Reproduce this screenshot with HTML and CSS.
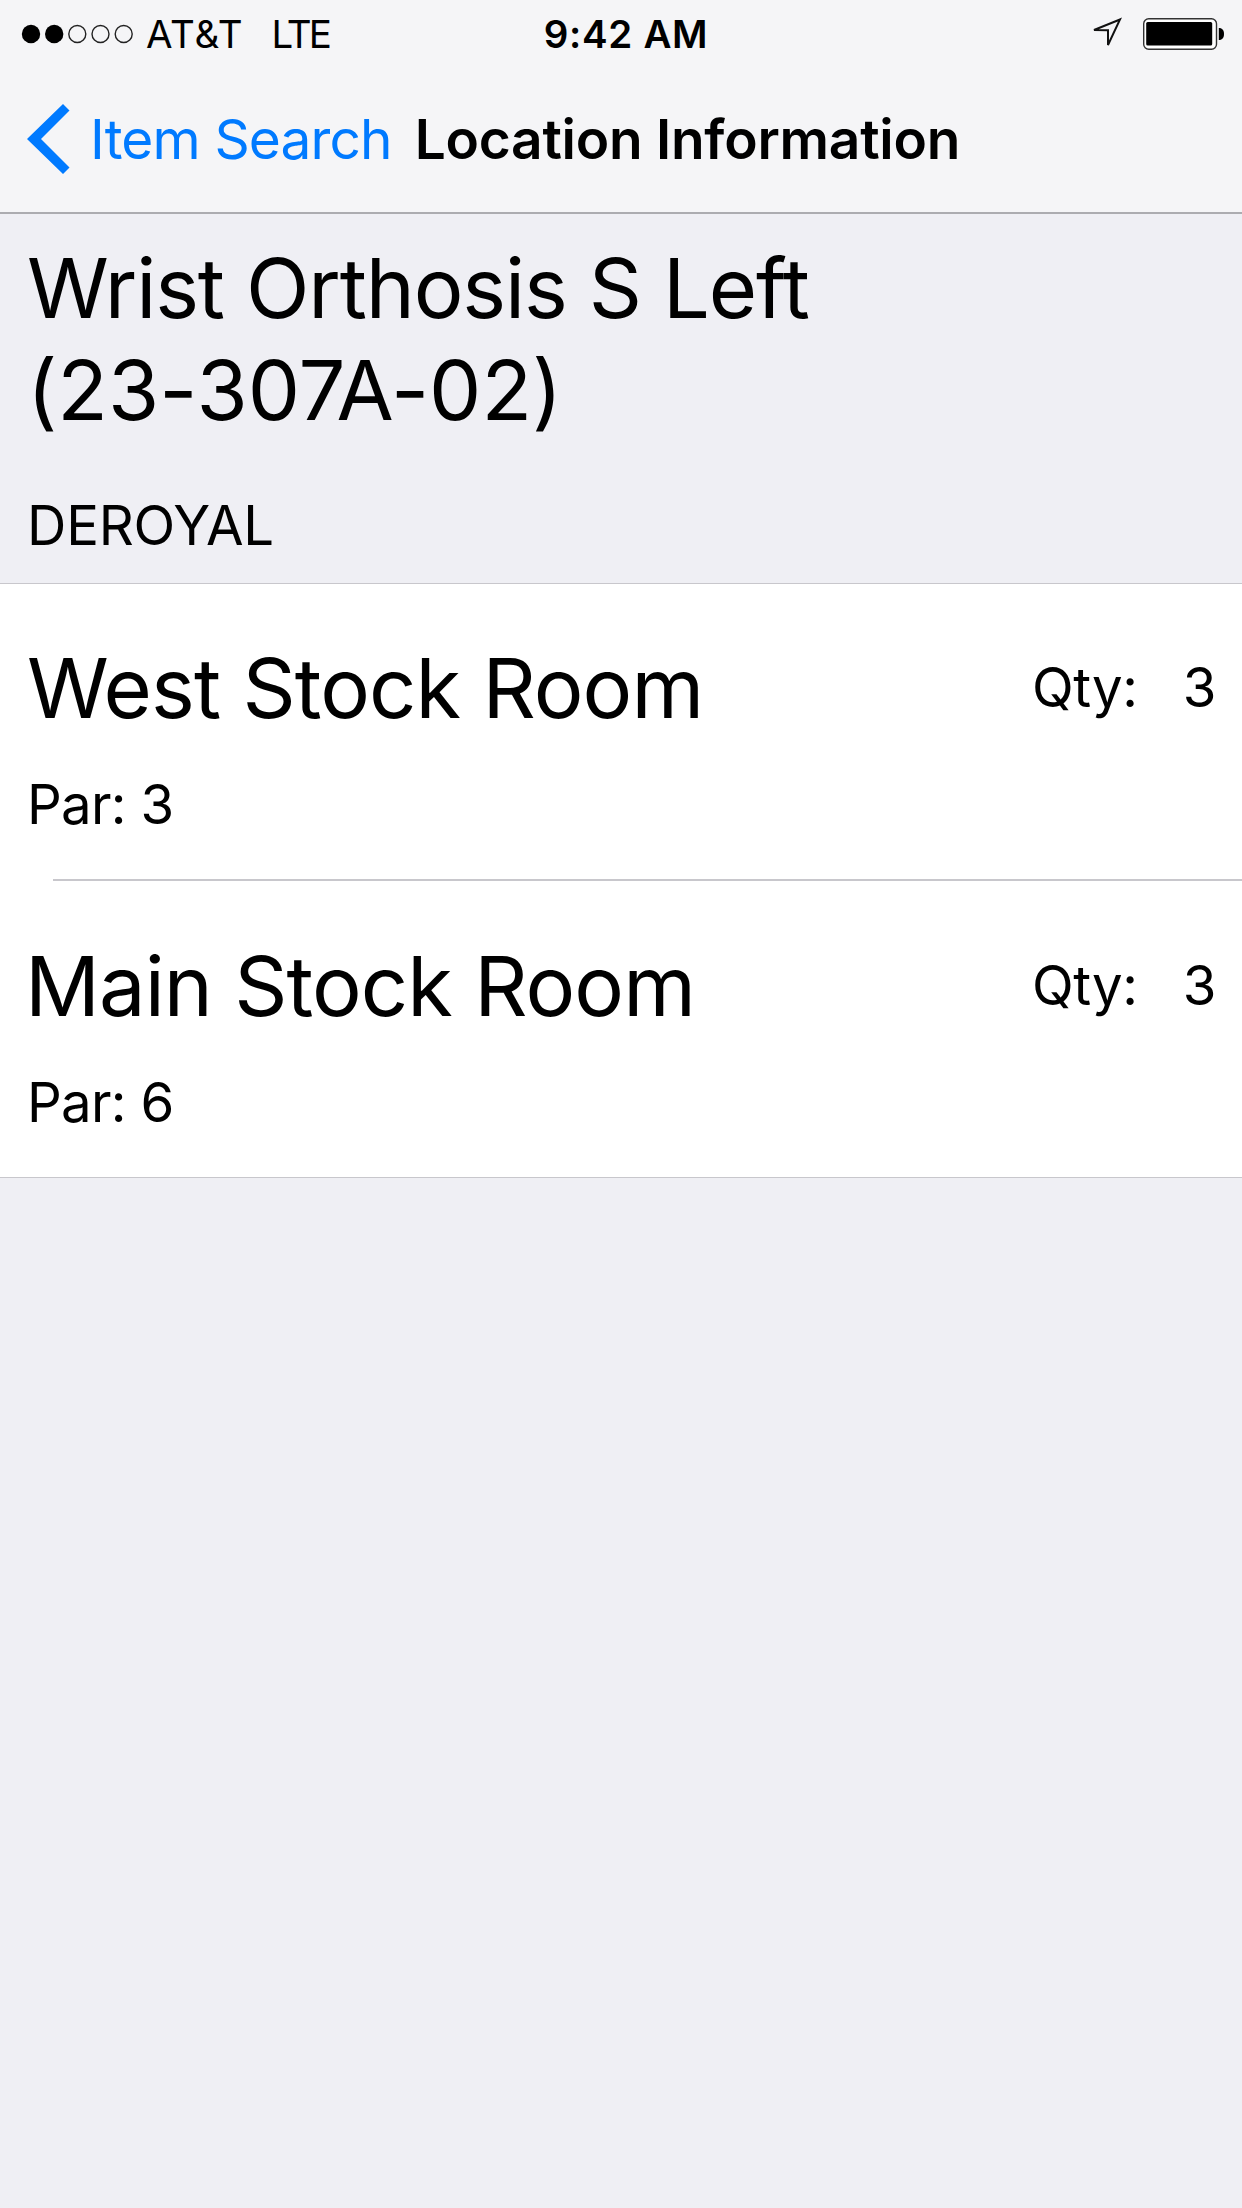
FILE: index.html
```html
<!DOCTYPE html>
<html lang="en">
<head>
    <meta charset="UTF-8">
    <meta name="viewport" content="width=device-width, initial-scale=1.0">
    <title>Location Information</title>
    <link rel="stylesheet" href="styles.css">
</head>
<body>
    <div class="header">
        <div class="status-bar">
            <div class="carrier">
                <svg class="signal" width="114" height="20" viewBox="0 0 114 20">
                    <circle cx="10" cy="10" r="9.2"/>
                    <circle cx="33.2" cy="10" r="9.2"/>
                    <circle class="empty" cx="56.3" cy="10" r="8.5"/>
                    <circle class="empty" cx="79.5" cy="10" r="8.5"/>
                    <circle class="empty" cx="102.7" cy="10" r="8.5"/>
                </svg>
                <span class="operator">AT&amp;T</span>
                <span class="network">LTE</span>
            </div>
            <div class="time">9:42 AM</div>
            <div class="indicators">
                <svg class="location" width="34" height="34" viewBox="0 0 34 34">
                    <path d="M31 2.5 L5 13 L19 13.2 L19 28 Z"/>
                </svg>
                <svg class="battery" width="82" height="32" viewBox="0 0 82 32">
                    <rect class="battery-shell" x="0.7" y="0.7" width="72.8" height="30.6" rx="5"/>
                    <rect x="3.2" y="4" width="66" height="23.6" rx="1.5"/>
                    <path d="M75.8 10 C79.5 10 81 12.5 81 16 C81 19.5 79.5 22 75.8 22 Z"/>
                </svg>
            </div>
        </div>
        <div class="nav-bar">
            <a class="back">
                <svg width="43" height="70" viewBox="0 0 43 70">
                    <path d="M0 35 L36 0 L42.5 6.5 L14 35 L42.5 63.5 L36 70 Z"/>
                </svg>
                <span>Item Search</span>
            </a>
            <div class="title">Location Information</div>
        </div>
    </div>
    <div class="item">
        <div class="item-name">Wrist Orthosis S Left</div>
        <div class="item-name item-number">(23-307A-02)</div>
        <div class="vendor">DEROYAL</div>
    </div>
    <div class="locations">
        <div class="row">
            <div class="info">
                <div class="name">West Stock Room</div>
                <div class="par">Par: 3</div>
            </div>
            <div class="qty"><span>Qty:</span><span>3</span></div>
        </div>
        <div class="separator"></div>
        <div class="row last">
            <div class="info">
                <div class="name">Main Stock Room</div>
                <div class="par">Par: 6</div>
            </div>
            <div class="qty"><span>Qty:</span><span>3</span></div>
        </div>
    </div>
</body>
</html>
```
FILE: styles.css
```css
* {
    box-sizing: border-box;
}
body {
    margin: 0;
    min-height: 100vh;
    background-color: #efeff4;
    color: #000000;
    font-family: Inter, "Liberation Sans", sans-serif;
    font-size: 54.5px;
    line-height: 66px;
    white-space: nowrap;
}
svg {
    display: block;
    flex: none;
}
.header {
    height: 214px;
    background-color: #f5f5f7;
    border-bottom: 2px solid #acacb0;
}
.status-bar {
    display: grid;
    grid-template-columns: 1fr auto 1fr;
    align-items: center;
    height: 68px;
    padding: 0 17px 0 21px;
    font-size: 38.5px;
    line-height: 68px;
}
.carrier {
    display: flex;
    align-items: center;
}
.signal .empty {
    fill: none;
    stroke: #222222;
    stroke-width: 1.4;
}
.operator {
    margin-left: 11px;
    letter-spacing: 0.8px;
}
.network {
    margin-left: 28px;
    letter-spacing: -2.8px;
}
.time {
    font-weight: 600;
    letter-spacing: 0.7px;
    margin-left: 6px;
}
.indicators {
    display: flex;
    justify-content: flex-end;
    align-items: center;
    gap: 20px;
}
.location path {
    fill: none;
    stroke: #111111;
    stroke-width: 2;
}
.battery-shell {
    fill: #ffffff;
    stroke: #333333;
    stroke-width: 1.4;
}
.nav-bar {
    display: flex;
    align-items: center;
    height: 142px;
    padding-left: 27px;
    font-size: 55px;
}
.back {
    display: flex;
    align-items: center;
    gap: 20px;
    color: #007aff;
    letter-spacing: -0.87px;
}
.back svg {
    fill: #007aff;
}
.title {
    margin-left: 23px;
    font-weight: 600;
    letter-spacing: -0.25px;
}
.item {
    height: 369px;
    padding: 23px 26px 0 27px;
}
.item-name {
    font-size: 83px;
    line-height: 102.4px;
    letter-spacing: -1.15px;
    /* keep "ft" as two separate letters */
    font-variant-ligatures: none;
}
.item-number {
    letter-spacing: 0;
}
.vendor {
    margin-top: 50px;
    letter-spacing: -0.2px;
}
.locations {
    background-color: #ffffff;
    border-top: 1px solid #c8c7cc;
    border-bottom: 1px solid #c8c7cc;
}
.row {
    display: flex;
    justify-content: space-between;
    height: 295px;
    padding: 54px 26px 0 27px;
}
.last {
    height: 296px;
    padding-top: 55px;
}
.separator {
    height: 2px;
    margin-left: 53px;
    background-color: #c8c7cc;
}
.name {
    font-size: 83px;
    line-height: 100px;
    letter-spacing: -0.95px;
}
.last .name {
    margin-left: -2px;
}
.par {
    margin-top: 33px;
    letter-spacing: -0.7px;
}
.qty {
    display: flex;
    gap: 45px;
    padding-top: 16px;
    letter-spacing: -0.3px;
}
```
